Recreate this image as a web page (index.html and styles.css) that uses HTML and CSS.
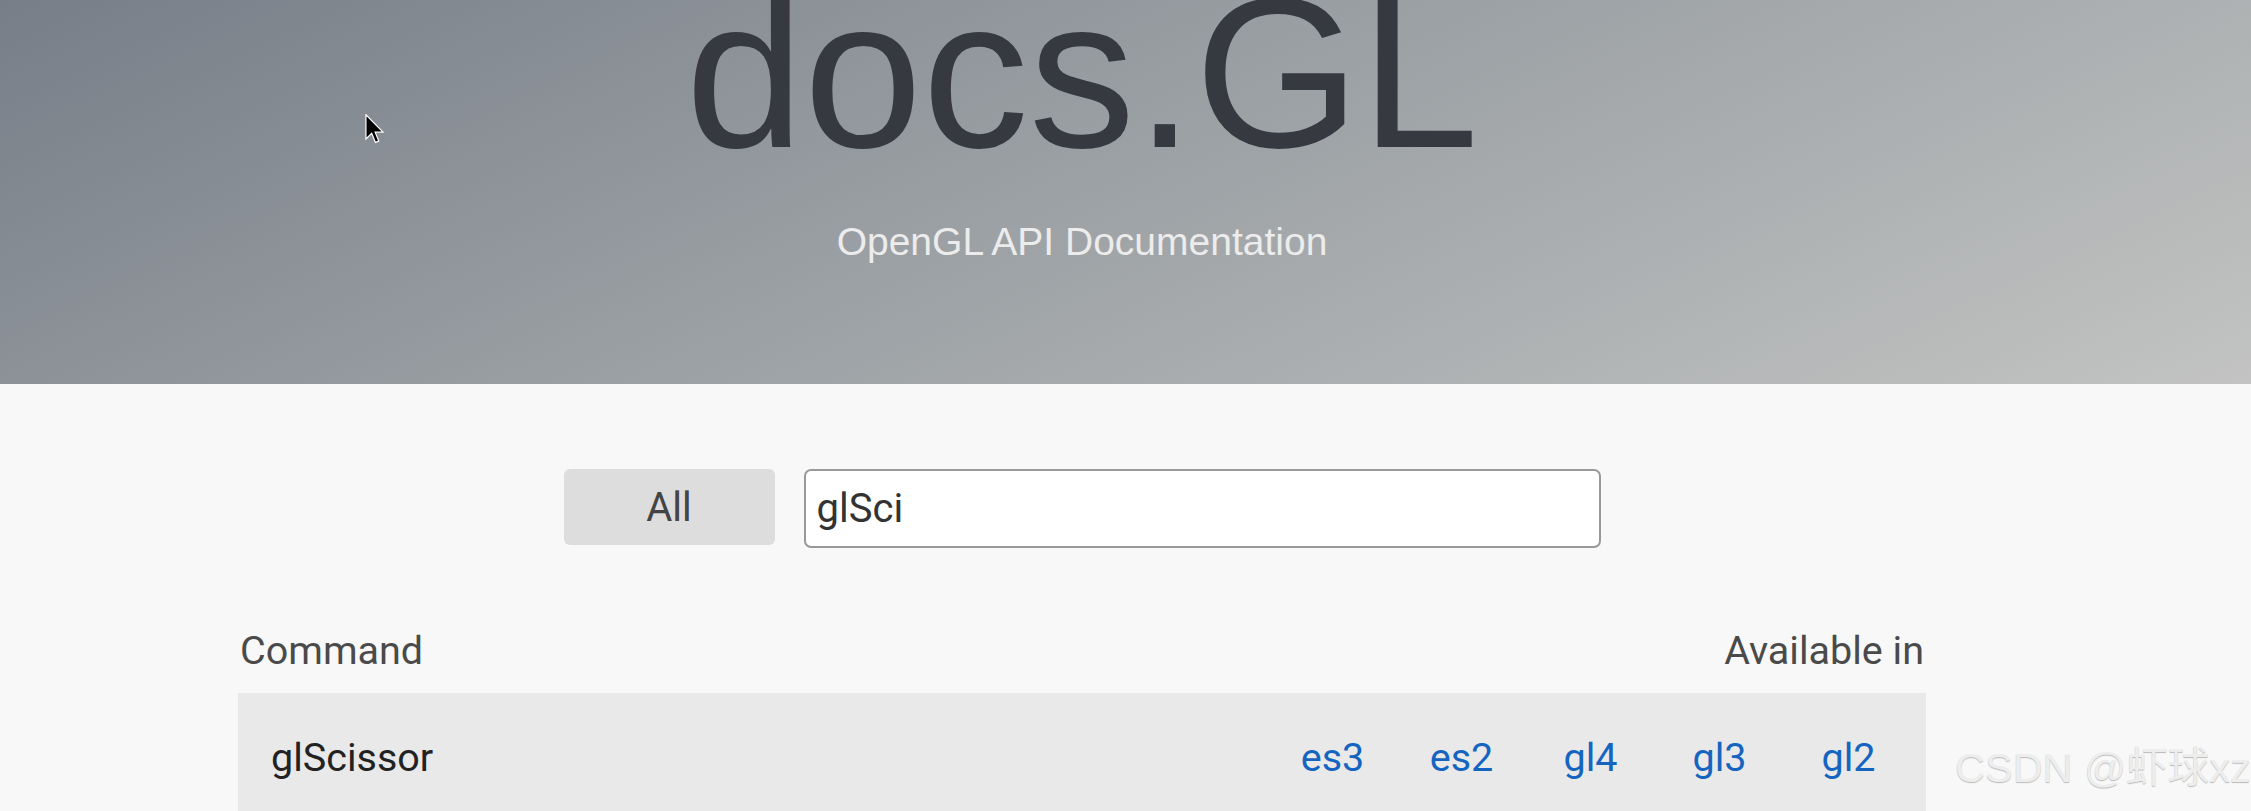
FILE: index.html
```html
<!DOCTYPE html>
<html lang="en">
<head>
<meta charset="utf-8">
<title>docs.GL</title>
<link rel="stylesheet" href="styles.css">
</head>
<body>
<header class="hero">
  <div class="wrap">
    <h1 class="title">docs.GL</h1>
    <p class="subtitle">OpenGL API Documentation</p>
  </div>
</header>
<main class="wrap">
  <div class="controls">
    <button class="btn-all">All</button>
    <input class="search" type="text" value="glSci">
  </div>
  <section class="table">
    <div class="thead">
      <span>Command</span>
      <span>Available in</span>
    </div>
    <div class="row">
      <span class="cmd">glScissor</span>
      <span class="versions">
        <a href="#">es3</a>
        <a href="#">es2</a>
        <a href="#">gl4</a>
        <a href="#">gl3</a>
        <a href="#">gl2</a>
      </span>
    </div>
  </section>
</main>
<div class="watermark">CSDN @虾球xz</div>
<svg class="cursor" width="20" height="31" viewBox="0 0 13 20.5">
  <path d="M0.5,0.5 V16.5 L4.3,12.8 L6.8,18.8 L9,17.9 L6.6,12 H11.8 Z" fill="#000" stroke="#fff" stroke-width="0.8" stroke-linejoin="miter"/>
</svg>
</body>
</html>
```
FILE: styles.css
```css
html, body {
  margin: 0;
  padding: 0;
}
body {
  background: #f8f8f8;
  font-family: Roboto, "Liberation Sans", Arial, sans-serif;
  overflow: hidden;
  height: 811px;
  position: relative;
}
.wrap {
  width: 2164px;
}
.hero {
  height: 384px;
  background: linear-gradient(155deg, #777e88 0%, #9a9fa3 45%, #c2c3c2 100%);
  overflow: hidden;
}
.title {
  margin: -33px 0 0;
  font-family: "Liberation Sans", Arial, sans-serif;
  font-weight: normal;
  font-size: 213px;
  line-height: 212px;
  color: #363940;
  text-align: center;
}
.subtitle {
  margin: 43px 0 0;
  font-family: "Liberation Sans", Arial, sans-serif;
  font-size: 39px;
  line-height: 1;
  color: #ececec;
  text-align: center;
}
.controls {
  margin-top: 85px;
  display: flex;
  justify-content: center;
  align-items: flex-start;
  gap: 29px;
}
.btn-all {
  width: 211px;
  height: 76px;
  border: none;
  border-radius: 6px;
  background: #dddddd;
  font-family: Roboto, sans-serif;
  font-size: 40px;
  color: #444;
  padding: 0;
}
.search {
  box-sizing: border-box;
  width: 797px;
  height: 79px;
  border: 2px solid #999;
  border-radius: 7px;
  background: #fff;
  padding: 0 0 0 11px;
  font-family: Roboto, sans-serif;
  font-size: 40px;
  color: #333;
  outline: none;
}
.table {
  width: 1688px;
  margin: 79px auto 0;
}
.thead {
  display: flex;
  justify-content: space-between;
  font-size: 39.5px;
  color: #4a4a4a;
  padding: 0 2px;
}
.row {
  margin-top: 19px;
  background: #e9e9e9;
  display: flex;
  justify-content: space-between;
  align-items: center;
  padding: 41px 13px 40px 33px;
  font-size: 39.5px;
}
.cmd {
  color: #222;
}
.versions {
  display: flex;
}
.versions a {
  width: 129px;
  text-align: center;
  color: #1565c0;
  text-decoration: none;
}
.watermark {
  position: absolute;
  left: 1955px;
  top: 747px;
  font-family: "Liberation Sans", "Noto Sans CJK SC", sans-serif;
  font-size: 41.5px;
  line-height: 1;
  color: #ededed;
  text-shadow: 0 1px 1px rgba(0, 0, 0, 0.25);
  white-space: nowrap;
}
.cursor {
  position: absolute;
  left: 365px;
  top: 114px;
}
```
